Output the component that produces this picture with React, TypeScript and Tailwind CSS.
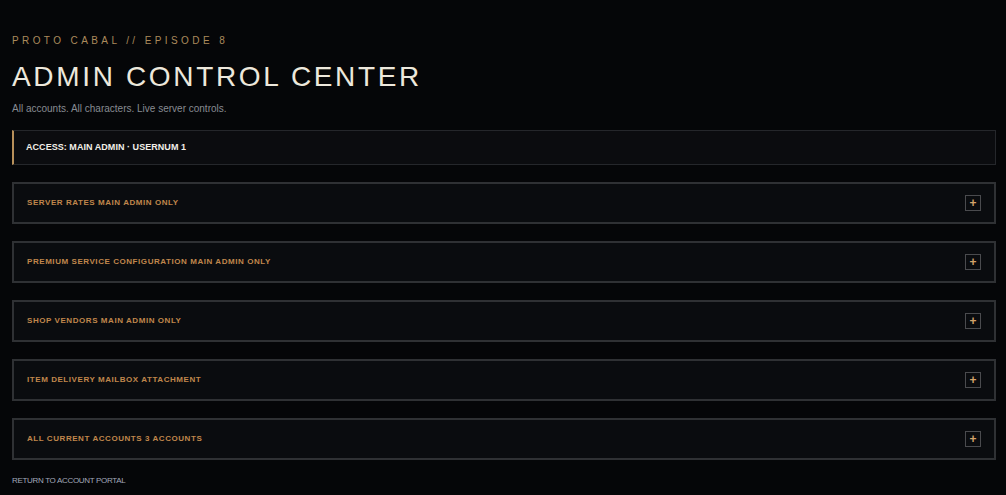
const sections = [
  "Server Rates Main Admin Only",
  "Premium Service Configuration Main Admin Only",
  "Shop Vendors Main Admin Only",
  "Item Delivery Mailbox Attachment",
  "All Current Accounts 3 Accounts",
];

const font = "font-['Liberation_Sans',Arial,sans-serif]";

export default function App() {
  return (
    <div className={`min-h-screen bg-[#050608] pl-3 pr-[10px] pt-[35px] ${font}`}>
      <p className="text-[10px] leading-[12px] uppercase tracking-[0.34em] text-[#ab8a5c]">
        Proto Cabal // Episode 8
      </p>
      <h1 className="mt-[16px] text-[28px] leading-[28px] font-normal uppercase tracking-[0.095em] text-[#ede8dc]">
        Admin Control Center
      </h1>
      <p className="mt-[12px] text-[10px] leading-[12px] text-[#878b92]">
        All accounts. All characters. Live server controls.
      </p>

      <div className="mt-[15px] flex h-[35px] items-center border border-[#25272b] border-l-2 border-l-[#b8905a] bg-[#0b0c0f] pl-3">
        <span className="text-[9px] font-semibold uppercase tracking-[0.005em] text-[#f2efe8]">
          Access: Main Admin · Usernum 1
        </span>
      </div>

      <div className="mt-[17px] flex flex-col gap-[17px]">
        {sections.map((title) => (
          <div
            key={title}
            className="flex h-[42px] items-center justify-between border-2 border-[#2f3134] bg-[#0a0c0f] pl-[13px] pr-[13px]"
          >
            <span className="text-[8px] font-bold uppercase tracking-[0.07em] text-[#c0874c]">
              {title}
            </span>
            <button
              type="button"
              className="flex h-4 w-4 items-center justify-center border border-[#4a4b4e] bg-transparent text-[12px] font-bold leading-none text-[#d4a36a]"
            >
              +
            </button>
          </div>
        ))}
      </div>

      <a className="mt-[16px] block text-[8px] leading-[10px] uppercase tracking-[-0.04em] text-[#a3a9ba]">
        Return to account portal
      </a>
    </div>
  );
}
